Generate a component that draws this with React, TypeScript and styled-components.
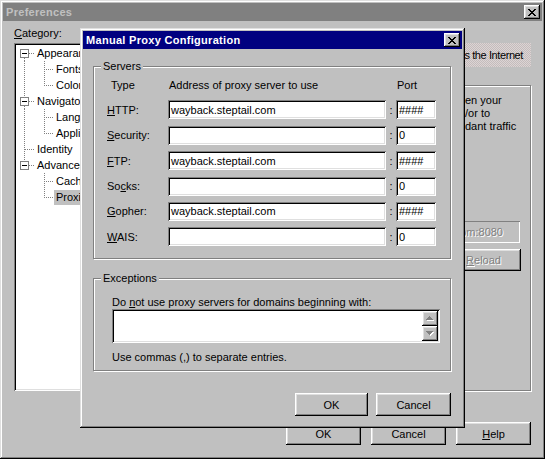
import React from 'react';
import styled, { createGlobalStyle, css } from 'styled-components';

const GlobalStyle = createGlobalStyle`
  html, body {
    margin: 0;
    padding: 0;
    background: #c0c0c0;
  }
  body {
    font-family: "Liberation Sans", Arial, sans-serif;
    font-size: 11px;
    color: #000;
  }
  * {
    box-sizing: border-box;
  }
`;

const windowEdge = css`
  box-shadow: inset -1px -1px #000, inset 1px 1px #dfdfdf, inset -2px -2px #808080, inset 2px 2px #fff;
`;

const buttonEdge = css`
  box-shadow: inset -1px -1px #000, inset 1px 1px #fff, inset -2px -2px #808080, inset 2px 2px #dfdfdf;
`;

const sunkenEdge = css`
  box-shadow: inset 1px 1px #808080, inset -1px -1px #fff, inset 2px 2px #000, inset -2px -2px #dfdfdf;
`;

const disabledText = css`
  color: #808080;
  text-shadow: 1px 1px 0 #fff;
`;

const Window = styled.div`
  position: relative;
  width: 545px;
  height: 459px;
  padding: 3px;
  background: #c0c0c0;
  display: flex;
  flex-direction: column;
  ${windowEdge}
`;

const Dialog = styled.div`
  position: absolute;
  left: 80px;
  top: 28px;
  width: 385px;
  height: 400px;
  padding: 3px;
  background: #c0c0c0;
  display: flex;
  flex-direction: column;
  ${windowEdge}
`;

const TitleBar = styled.div<{ $active?: boolean }>`
  height: 18px;
  flex-shrink: 0;
  display: flex;
  align-items: center;
  justify-content: space-between;
  padding: 0 2px 0 3px;
  background: ${(p) => (p.$active ? '#000080' : '#808080')};
  color: ${(p) => (p.$active ? '#fff' : '#c0c0c0')};
  font-weight: bold;
  letter-spacing: 0.3px;
`;

const CloseButton = styled.div`
  width: 16px;
  height: 14px;
  display: flex;
  align-items: center;
  justify-content: center;
  padding-top: 1px;
  background: #c0c0c0;
  ${buttonEdge}
`;

const CloseGlyph = () => (
  <svg width="8" height="7" viewBox="0 0 8 7" shapeRendering="crispEdges">
    <path
      fill="#000"
      d="M0 0h2v1H0zM6 0h2v1H6zM1 1h2v1H1zM5 1h2v1H5zM2 2h4v1H2zM3 3h2v1H3zM2 4h4v1H2zM1 5h2v1H1zM5 5h2v1H5zM0 6h2v1H0zM6 6h2v1H6z"
    />
  </svg>
);

const Button = styled.div<{ $width?: number; $disabled?: boolean }>`
  width: ${(p) => p.$width ?? 75}px;
  height: 23px;
  display: flex;
  align-items: center;
  justify-content: center;
  background: #c0c0c0;
  ${buttonEdge}
  ${(p) => p.$disabled && disabledText}
`;

/* ---------- Preferences (back window) ---------- */

const PrefBody = styled.div`
  flex: 1;
  display: grid;
  grid-template-columns: 140px 1fr;
  grid-template-rows: 16px auto;
  column-gap: 10px;
  padding: 6px 11px 0 11px;
`;

const FieldLabel = styled.div`
  line-height: 13px;
`;

const TreeBox = styled.div`
  height: 348px;
  padding: 2px;
  background: #fff;
  overflow: hidden;
  ${sunkenEdge}
`;

const TreeRow = styled.div`
  height: 16px;
  display: flex;
  align-items: center;
  white-space: nowrap;
`;

const TreeLabel = styled.span<{ $selected?: boolean }>`
  line-height: 15px;
  padding: 0 2px;
  background: ${(p) => (p.$selected ? '#c0c0c0' : 'transparent')};
`;

const RightPane = styled.div`
  display: flex;
  flex-direction: column;
`;

const PageHeader = styled.div`
  height: 24px;
  display: flex;
  align-items: center;
  justify-content: space-between;
  padding: 0 8px 0 6px;
  white-space: nowrap;
  background: repeating-conic-gradient(#c4bcbc 0 25%, #dcd4d4 0 50%) 0 0 / 2px 2px;
`;

const PageTitle = styled.span`
  font-weight: bold;
`;

const PageCaption = styled.span`
  letter-spacing: -0.4px;
`;

const GroupBox = styled.div<{ $height?: number }>`
  position: relative;
  ${(p) => p.$height && `height: ${p.$height}px;`}
  border: 1px solid #808080;
  box-shadow: inset 1px 1px #fff, 1px 1px #fff;
`;

const Legend = styled.span`
  position: absolute;
  top: -7px;
  left: 7px;
  padding: 0 2px;
  line-height: 13px;
  background: #c0c0c0;
`;

const PageFrame = styled(GroupBox)`
  margin-top: 18px;
  padding-top: 8px;
  display: flex;
  flex-direction: column;
  align-items: flex-end;
`;

const Blurb = styled.div`
  align-self: stretch;
  display: grid;
  grid-template-columns: 1fr 65px;
  line-height: 13px;
  white-space: nowrap;
`;

const CoveredText = styled.span`
  display: flex;
  justify-content: flex-end;
  overflow: hidden;
`;

const UrlField = styled.div`
  width: 300px;
  height: 22px;
  margin: 88px 10px 0 0;
  padding: 0 17px 0 3px;
  display: flex;
  align-items: center;
  justify-content: flex-end;
  white-space: nowrap;
  overflow: hidden;
  box-shadow: inset 1px 1px #808080, inset -1px -1px #fff;
  ${disabledText}
`;

const ReloadButton = styled(Button)`
  height: 22px;
  margin: 6px 9px 0 0;
`;

const Footer = styled.div<{ $gap: number; $pad: string }>`
  display: flex;
  justify-content: flex-end;
  gap: ${(p) => p.$gap}px;
  padding: ${(p) => p.$pad};
`;

/* ---------- Manual Proxy Configuration dialog ---------- */

const DialogBody = styled.div`
  flex: 1;
  display: flex;
  flex-direction: column;
  padding: 17px 11px 0 10px;
`;

const ServerGrid = styled.div`
  display: grid;
  grid-template-columns: 61px 218px 10px 40px;
  grid-template-rows: 15px repeat(6, 19px);
  row-gap: 6.4px;
  padding: 12px 0 12px 13px;
  align-items: center;
`;

const ColumnHead = styled.div<{ $indent?: number }>`
  align-self: start;
  line-height: 13px;
  padding-left: ${(p) => p.$indent ?? 0}px;
  white-space: nowrap;
`;

const Colon = styled.div`
  text-align: center;
`;

const Field = styled.div`
  height: 19px;
  padding: 0 3px;
  display: flex;
  align-items: center;
  background: #fff;
  white-space: nowrap;
  overflow: hidden;
  ${sunkenEdge}
`;

const Exceptions = styled(GroupBox)`
  margin-top: 19px;
  padding: 17px 0 6px 18px;
`;

const Line = styled.div`
  line-height: 13px;
`;

const TextArea = styled.div`
  width: 328px;
  height: 34px;
  padding: 2px;
  display: flex;
  justify-content: flex-end;
  background: #fff;
  ${sunkenEdge}
`;

const ScrollBar = styled.div`
  width: 16px;
  display: flex;
  flex-direction: column;
`;

const ScrollButton = styled.div`
  flex: 1;
  display: flex;
  align-items: center;
  justify-content: center;
  background: #c0c0c0;
  ${buttonEdge}
`;

const Hint = styled(Line)`
  margin-top: 8px;
`;

const Arrow = ({ down }: { down?: boolean }) => {
  const rows = [1, 3, 5, 7];
  const ordered = down ? [...rows].reverse() : rows;
  const d = ordered.map((w, i) => `M${(7 - w) / 2 + 1} ${i}h${w}v1h-${w}z`).join('');
  return (
    <svg width="10" height="6" viewBox="0 0 10 6" shapeRendering="crispEdges">
      <path d={d} fill="#fff" transform="translate(1 1)" />
      <path d={d} fill="#808080" />
    </svg>
  );
};

type TreeItem = {
  label: string;
  level: 0 | 1;
  box?: boolean;
  up?: boolean;
  down?: boolean;
  trunk?: boolean;
  last?: boolean;
  selected?: boolean;
};

const treeItems: TreeItem[] = [
  { label: 'Appearance', level: 0, box: true, down: true },
  { label: 'Fonts', level: 1, trunk: true },
  { label: 'Colors', level: 1, trunk: true, last: true },
  { label: 'Navigator', level: 0, box: true, up: true, down: true },
  { label: 'Languages', level: 1, trunk: true },
  { label: 'Applications', level: 1, trunk: true, last: true },
  { label: 'Identity', level: 0, up: true, down: true },
  { label: 'Advanced', level: 0, box: true, up: true },
  { label: 'Cache', level: 1 },
  { label: 'Proxies', level: 1, last: true, selected: true },
];

const dots = { stroke: '#808080', strokeDasharray: '1 1', strokeWidth: 1 };

const TreeGuide = ({ item }: { item: TreeItem }) => {
  if (item.level === 0) {
    const top = item.box ? 4 : 8;
    const bottom = item.box ? 13 : 8;
    return (
      <svg width="19" height="16" shapeRendering="crispEdges">
        {item.up && <line x1="8.5" y1="0" x2="8.5" y2={top} {...dots} />}
        {item.down && <line x1="8.5" y1={bottom} x2="8.5" y2="16" {...dots} />}
        {!item.box && (item.up || item.down) && <line x1="8.5" y1="0" x2="8.5" y2="16" {...dots} />}
        <line x1={item.box ? 13 : 9} y1="8.5" x2="19" y2="8.5" {...dots} />
        {item.box && (
          <>
            <rect x="4.5" y="4.5" width="8" height="8" fill="#fff" stroke="#808080" />
            <line x1="6" y1="8.5" x2="11" y2="8.5" stroke="#000" />
          </>
        )}
      </svg>
    );
  }
  return (
    <svg width="38" height="16" shapeRendering="crispEdges">
      {item.trunk && <line x1="8.5" y1="0" x2="8.5" y2="16" {...dots} />}
      <line x1="28.5" y1="0" x2="28.5" y2={item.last ? 9 : 16} {...dots} />
      <line x1="30" y1="8.5" x2="38" y2="8.5" {...dots} />
    </svg>
  );
};

const servers = [
  { key: 'H', rest: 'TTP:', address: 'wayback.steptail.com', port: '####' },
  { pre: '', key: 'S', rest: 'ecurity:', address: '', port: '0' },
  { key: 'F', rest: 'TP:', address: 'wayback.steptail.com', port: '####' },
  { pre: 'So', key: 'c', rest: 'ks:', address: '', port: '0' },
  { key: 'G', rest: 'opher:', address: 'wayback.steptail.com', port: '####' },
  { key: 'W', rest: 'AIS:', address: '', port: '0' },
];

const blurb = [
  ['A network proxy is used to provide additional security betwe', 'en your'],
  ['computer and the Internet (usually along with a firewall) and', '/or to'],
  ['increase performance between networks, by reducing redun', 'dant traffic'],
];

const ManualProxyDialog = () => (
  <Dialog>
    <TitleBar $active>
      <span>Manual Proxy Configuration</span>
      <CloseButton>
        <CloseGlyph />
      </CloseButton>
    </TitleBar>
    <DialogBody>
      <GroupBox>
        <Legend>Servers</Legend>
        <ServerGrid>
          <ColumnHead $indent={4}>Type</ColumnHead>
          <ColumnHead $indent={1}>Address of proxy server to use</ColumnHead>
          <div />
          <ColumnHead $indent={1}>Port</ColumnHead>
          {servers.map((s) => (
            <React.Fragment key={s.key + s.rest}>
              <div>
                {s.pre}
                <u>{s.key}</u>
                {s.rest}
              </div>
              <Field>{s.address}</Field>
              <Colon>:</Colon>
              <Field>{s.port}</Field>
            </React.Fragment>
          ))}
        </ServerGrid>
      </GroupBox>
      <Exceptions>
        <Legend>Exceptions</Legend>
        <Line>
          Do <u>n</u>ot use proxy servers for domains beginning with:
        </Line>
        <TextArea>
          <ScrollBar>
            <ScrollButton>
              <Arrow />
            </ScrollButton>
            <ScrollButton>
              <Arrow down />
            </ScrollButton>
          </ScrollBar>
        </TextArea>
        <Hint>Use commas (,) to separate entries.</Hint>
      </Exceptions>
      <Footer $gap={8} $pad="22px 0 9px 0">
        <Button $width={73}>OK</Button>
        <Button>Cancel</Button>
      </Footer>
    </DialogBody>
  </Dialog>
);

const App = () => (
  <>
    <GlobalStyle />
    <Window>
      <TitleBar>
        <span>Preferences</span>
        <CloseButton>
          <CloseGlyph />
        </CloseButton>
      </TitleBar>
      <PrefBody>
        <FieldLabel>
          <u>C</u>ategory:
        </FieldLabel>
        <div />
        <TreeBox>
          {treeItems.map((item) => (
            <TreeRow key={item.label}>
              <TreeGuide item={item} />
              <TreeLabel $selected={item.selected}>{item.label}</TreeLabel>
            </TreeRow>
          ))}
        </TreeBox>
        <RightPane>
          <PageHeader>
            <PageTitle>Proxies</PageTitle>
            <PageCaption>Configure proxies to access the Internet</PageCaption>
          </PageHeader>
          <PageFrame $height={306}>
            <Blurb>
              {blurb.map(([covered, shown]) => (
                <React.Fragment key={shown}>
                  <CoveredText>
                    <span>{covered}</span>
                  </CoveredText>
                  <span>{shown}</span>
                </React.Fragment>
              ))}
            </Blurb>
            <UrlField>http://wayback.steptail.com:8080</UrlField>
            <ReloadButton $disabled>
              <span>
                <u>R</u>eload
              </span>
            </ReloadButton>
          </PageFrame>
        </RightPane>
      </PrefBody>
      <Footer $gap={10} $pad="0 11px 11px 0">
        <Button>OK</Button>
        <Button>Cancel</Button>
        <Button>
          <span>
            <u>H</u>elp
          </span>
        </Button>
      </Footer>
    </Window>
    <ManualProxyDialog />
  </>
);

export default App;
